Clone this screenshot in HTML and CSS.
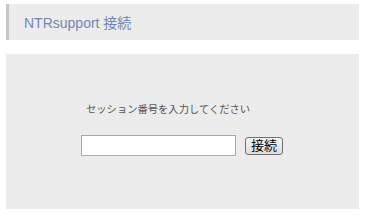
FILE: index.html
```html
<!DOCTYPE html>
<html lang="ja">
<head>
    <meta charset="UTF-8">
    <title>NTRsupport 接続</title>
    <link rel="stylesheet" href="styles.css">
</head>
<body>
    <!-- 見出し -->
    <div class="header">
        <h1 class="header-title">NTRsupport 接続</h1>
    </div>

    <!-- 接続フォーム -->
    <div class="panel">
        <p class="panel-desc">セッション番号を入力してください</p>
        <form class="connect-form" onsubmit="return false;">
            <input type="text" class="session-input">
            <button type="submit" class="connect-button">接続</button>
        </form>
    </div>
</body>
</html>
```

FILE: styles.css
```css
* {
    margin: 0;
    padding: 0;
    box-sizing: border-box;
}

body {
    font-family: 'Liberation Sans', 'Noto Sans CJK JP', sans-serif;
    background: #fff;
    padding: 4px 6px;
}

/* 見出し */
.header {
    height: 36px;
    background: #ececec;
    border-left: 3px solid #c6c6c6;
    display: flex;
    align-items: center;
    padding-left: 15px;
}

.header-title {
    font-size: 14px;
    font-weight: normal;
    color: #7287b4;
}

/* 接続フォーム */
.panel {
    margin-top: 14px;
    height: 155px;
    background: #ececec;
    padding-top: 48px;
    padding-left: 75px;
}

.panel-desc {
    font-size: 10.3px;
    color: #555;
    padding-left: 5px;
    line-height: 16px;
}

.connect-form {
    display: flex;
    align-items: center;
    margin-top: 17px;
}

.session-input {
    width: 155px;
    height: 21px;
    border: 1px solid #a9a9a9;
    background: #fff;
}

.connect-button {
    margin-left: 9px;
    width: 38px;
    height: 18px;
    font-family: 'Liberation Sans', 'Noto Sans CJK JP', sans-serif;
    font-size: 13px;
    color: #000;
    background: linear-gradient(#f4f4f4, #dcdcdc);
    border: 1px solid #707070;
    border-radius: 3px;
    line-height: 14px;
}
```
